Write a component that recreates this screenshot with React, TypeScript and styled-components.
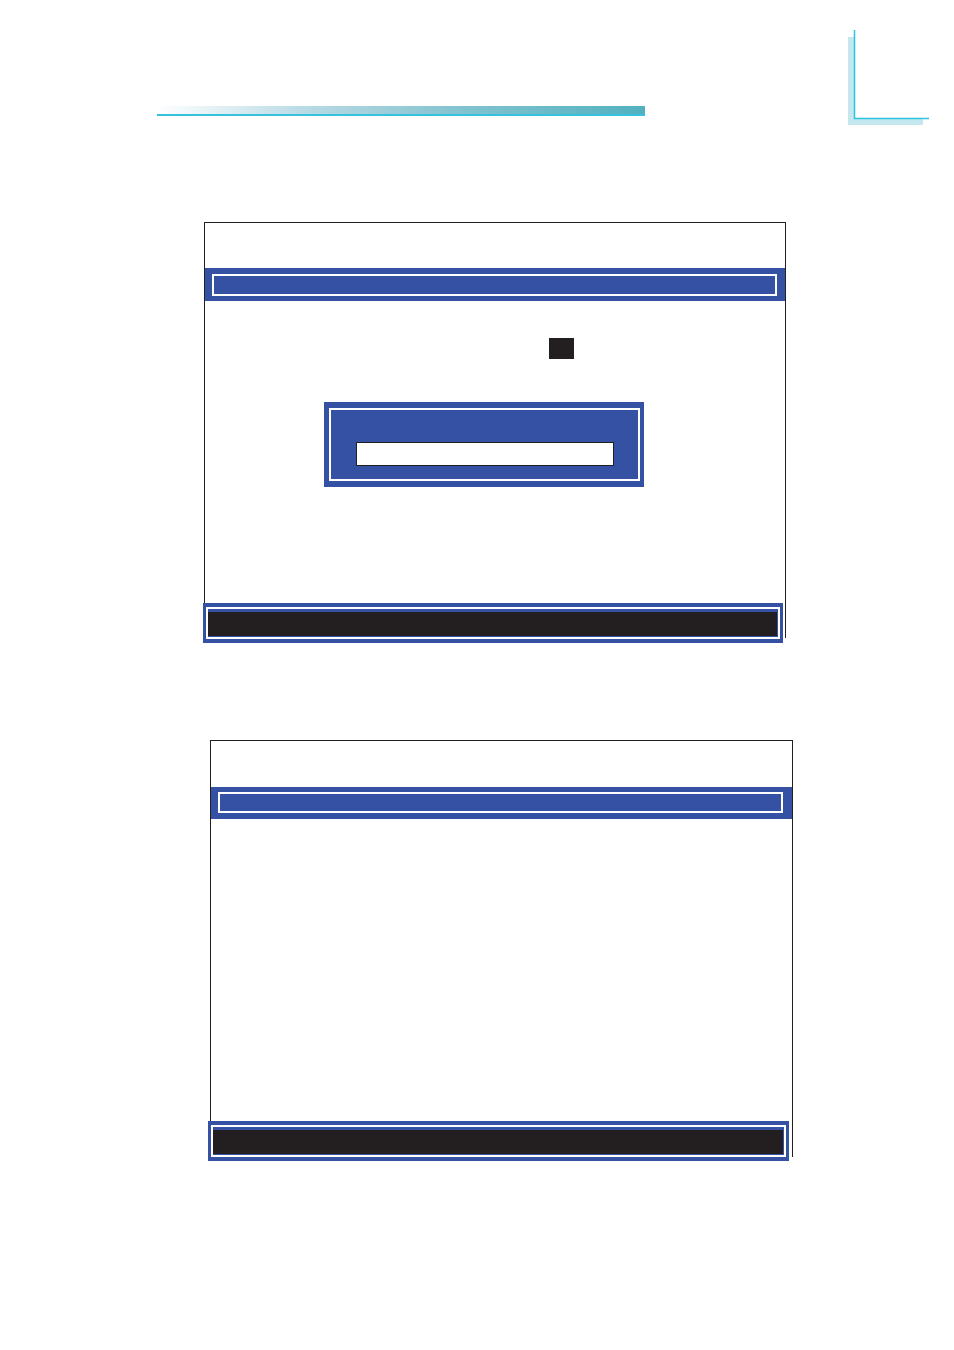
import React from 'react';
import styled, { createGlobalStyle } from 'styled-components';

const GlobalStyle = createGlobalStyle`
  html, body {
    margin: 0;
    padding: 0;
    background: #ffffff;
    font-family: "Liberation Sans", Arial, sans-serif;
  }
`;

const Page = styled.div`
  width: 954px;
  height: 1350px;
  background: #ffffff;
  display: flex;
  flex-direction: column;
`;

const Header = styled.div`
  display: flex;
  align-items: flex-start;
  height: 124px;
`;

const TitleRule = styled.div`
  margin-top: 106px;
  margin-left: 157px;
  width: 488px;
  height: 8px;
  background: linear-gradient(to right, #ffffff 0%, #b9dbe5 30%, #86c4d1 60%, #52b1bf 100%);
  border-bottom: 2px solid #36c1dc;
`;

const CornerMark = styled.svg`
  margin-left: auto;
  margin-right: 24px;
  margin-top: 30px;
`;

const Panel = styled.div<{ $left: number; $top: number; $width: number }>`
  margin-left: ${p => p.$left}px;
  margin-top: ${p => p.$top}px;
  width: ${p => p.$width}px;
  box-sizing: border-box;
  border: 1px solid #231f20;
  border-bottom: none;
  background: #ffffff;
  display: flex;
  flex-direction: column;
`;

const TitleSpace = styled.div<{ $height: number }>`
  height: ${p => p.$height}px;
`;

const Band = styled.div<{ $pad: string; $height: number }>`
  height: ${p => p.$height}px;
  box-sizing: border-box;
  background: #3551a3;
  padding: ${p => p.$pad};
`;

const BandOutline = styled.div`
  height: 100%;
  border: 2px solid #ffffff;
  box-sizing: border-box;
`;

const Body = styled.div`
  height: 302px;
  display: flex;
  flex-direction: column;
  align-items: flex-start;
`;

const Cursor = styled.div<{ $top: number; $left: number }>`
  margin-top: ${p => p.$top}px;
  margin-left: ${p => p.$left}px;
  width: 25px;
  height: 21px;
  background: #231f20;
`;

const Dialog = styled.div<{ $top: number; $left: number }>`
  margin-top: ${p => p.$top}px;
  margin-left: ${p => p.$left}px;
  width: 320px;
  height: 85px;
  box-sizing: border-box;
  background: #3551a3;
  padding: 6px 4px 6px 5px;
`;

const DialogFrame = styled.div`
  height: 100%;
  border: 2px solid #ffffff;
  box-sizing: border-box;
  padding-top: 32px;
  padding-left: 25px;
`;

const InputField = styled.div`
  width: 258px;
  height: 24px;
  box-sizing: border-box;
  background: #ffffff;
  border: 1px solid #231f20;
`;

const StatusBar = styled.div<{ $shift: number; $width: number; $drop: number }>`
  margin-left: ${p => p.$shift}px;
  margin-bottom: ${p => -p.$drop}px;
  width: ${p => p.$width}px;
  height: 40px;
  box-sizing: border-box;
  background: #3551a3;
  padding: 4px 3px;
`;

const StatusFrame = styled.div`
  height: 100%;
  box-sizing: border-box;
  border: 2px solid #ffffff;
  padding: 3px 1px 1px 0;
`;

const StatusFill = styled.div`
  height: 100%;
  background: #231f20;
`;

export default function App() {
  return (
    <Page>
      <GlobalStyle />
      <Header>
        <TitleRule />
        <CornerMark width="82" height="95" viewBox="0 0 82 95">
          <rect x="0" y="7" width="6" height="88" fill="#c5e8f0" />
          <rect x="0" y="89" width="75" height="6" fill="#c5e8f0" />
          <path d="M6.5 0 V88.5 H81" fill="none" stroke="#2fc3df" strokeWidth="1.5" />
        </CornerMark>
      </Header>

      <Panel $left={204} $top={98} $width={582}>
        <TitleSpace $height={45} />
        <Band $pad="6px 8px 5px 7px" $height={33}>
          <BandOutline />
        </Band>
        <Body>
          <Cursor $top={37} $left={344} />
          <Dialog $top={43} $left={119}>
            <DialogFrame>
              <InputField />
            </DialogFrame>
          </Dialog>
        </Body>
        <StatusBar $shift={-2} $width={580} $drop={5}>
          <StatusFrame>
            <StatusFill />
          </StatusFrame>
        </StatusBar>
      </Panel>

      <Panel $left={210} $top={102} $width={583}>
        <TitleSpace $height={46} />
        <Band $pad="5px 9px 6px 7px" $height={32}>
          <BandOutline />
        </Band>
        <Body />
        <StatusBar $shift={-3} $width={581} $drop={4}>
          <StatusFrame>
            <StatusFill />
          </StatusFrame>
        </StatusBar>
      </Panel>
    </Page>
  );
}
